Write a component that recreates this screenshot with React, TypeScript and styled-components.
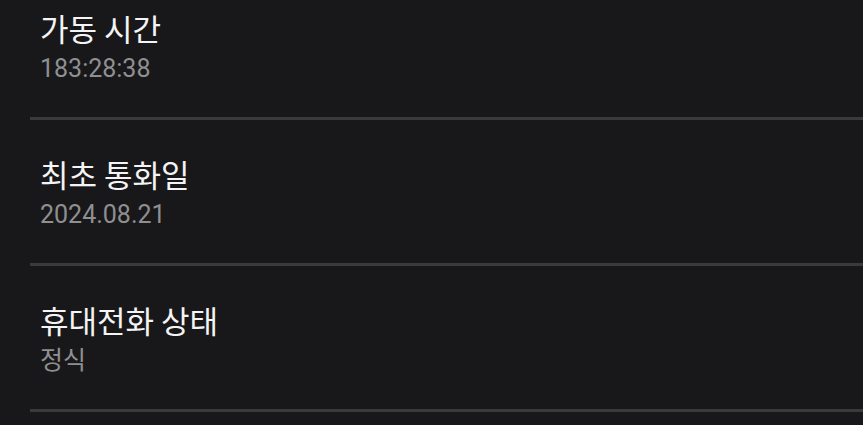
import React from 'react';

import styled, {createGlobalStyle} from 'styled-components';

const GlobalStyle = createGlobalStyle`
  html, body {
    margin: 0;
    padding: 0;
    background: #18181a;
    overflow: hidden;
  }
  body {
    font-family: Roboto, "Noto Sans CJK KR", sans-serif;
  }
`;

const Screen = styled.div`
  width: 863px;
  height: 425px;
  overflow: hidden;
  background: #18181a;
`;

const List = styled.ul`
  list-style: none;
  margin: -26px 0 0 0;
  padding: 0;
`;

const Item = styled.li`
  display: flex;
  flex-direction: column;
`;

const Texts = styled.div`
  display: flex;
  flex-direction: column;
  gap: 5px;
  padding: 34px 0 32px 40px;
`;

const Title = styled.span`
  font-family: "Noto Sans CJK KR", sans-serif;
  font-size: 31px;
  font-weight: 400;
  line-height: 40px;
  color: #f4f4f4;
`;

const Value = styled.span`
  font-family: Roboto, "Noto Sans CJK KR", sans-serif;
  font-size: 25px;
  line-height: 32px;
  color: #8f8f91;
`;

const Divider = styled.div`
  height: 3px;
  margin-left: 30px;
  background: #3a3a3c;
`;

const rows = [
  {title: '가동 시간', value: '183:28:38'},
  {title: '최초 통화일', value: '2024.08.21'},
  {title: '휴대전화 상태', value: '정식'},
];

function App() {
  return (
    <Screen>
      <GlobalStyle />
      <List>
        {rows.map(row => (
          <Item key={row.title}>
            <Texts>
              <Title>{row.title}</Title>
              <Value>{row.value}</Value>
            </Texts>
            <Divider />
          </Item>
        ))}
      </List>
    </Screen>
  );
}

export default App;
